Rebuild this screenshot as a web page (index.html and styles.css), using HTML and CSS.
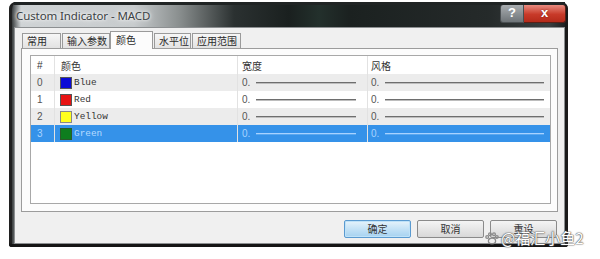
FILE: index.html
```html
<!DOCTYPE html>
<html>
<head>
<meta charset="utf-8">
<link rel="stylesheet" href="styles.css">
</head>
<body>
<div class="window">
  <div class="titlebar">
    <span class="title">Custom Indicator - MACD</span>
    <div class="caption-btns">
      <span class="cbtn help">?</span>
      <span class="cbtn close">x</span>
    </div>
  </div>
  <div class="client">
    <div class="tabs">
      <span class="tab t1">常用</span>
      <span class="tab t2">输入参数</span>
      <span class="tab t3 active">颜色</span>
      <span class="tab t4">水平位</span>
      <span class="tab t5">应用范围</span>
    </div>
    <div class="panel">
      <div class="list">
        <div class="row head">
          <span class="c-idx">#</span>
          <span class="c-color">颜色</span>
          <span class="c-width">宽度</span>
          <span class="c-style">风格</span>
        </div>
        <div class="row alt">
          <span class="c-idx">0</span>
          <span class="c-color"><i class="sw blue"></i><b class="cname">Blue</b></span>
          <span class="c-width"><em>0.</em><i class="line"></i></span>
          <span class="c-style"><em>0.</em><i class="line"></i></span>
        </div>
        <div class="row">
          <span class="c-idx">1</span>
          <span class="c-color"><i class="sw red"></i><b class="cname">Red</b></span>
          <span class="c-width"><em>0.</em><i class="line"></i></span>
          <span class="c-style"><em>0.</em><i class="line"></i></span>
        </div>
        <div class="row alt">
          <span class="c-idx">2</span>
          <span class="c-color"><i class="sw yellow"></i><b class="cname">Yellow</b></span>
          <span class="c-width"><em>0.</em><i class="line"></i></span>
          <span class="c-style"><em>0.</em><i class="line"></i></span>
        </div>
        <div class="row sel">
          <span class="c-idx">3</span>
          <span class="c-color"><i class="sw green"></i><b class="cname">Green</b></span>
          <span class="c-width"><em>0.</em><i class="line"></i></span>
          <span class="c-style"><em>0.</em><i class="line"></i></span>
        </div>
      </div>
    </div>
    <div class="buttons">
      <span class="btn default">确定</span>
      <span class="btn">取消</span>
      <span class="btn">重设</span>
    </div>
  </div>
  <div class="watermark">
    <svg class="paw" width="14" height="13" viewBox="0 0 14 13">
      <g fill="none" stroke="#8a8a8a" stroke-width="1.3">
        <ellipse cx="7" cy="9" rx="3.6" ry="2.8"/>
        <circle cx="2.2" cy="5" r="1.4"/>
        <circle cx="5" cy="2.2" r="1.4"/>
        <circle cx="9" cy="2.2" r="1.4"/>
        <circle cx="11.8" cy="5" r="1.4"/>
      </g>
    </svg>
    <span class="wm-text">@福汇小鱼2</span>
  </div>
</div>
</body>
</html>
```
FILE: styles.css
```css
html, body {
  margin: 0;
  padding: 0;
  background: #ffffff;
}
body {
  width: 600px;
  height: 259px;
  overflow: hidden;
  font-family: "Noto Sans CJK SC", "Noto Sans", sans-serif;
}
.window {
  position: relative;
  margin: 2px 0 0 9px;
  width: 559px;
  height: 245px;
  box-sizing: border-box;
  border-radius: 7px 7px 3px 3px;
  background: linear-gradient(to right, #2a2e2e 0, #3a3e3f 3px, #cfd3d5 12px, #c7cbcd 125px, #8a8f8f 170px, #2b3131 225px, #1a201f 280px, #23302c 310px, #1b2120 340px, #252a2a 480px, #3a3f40 540px, #1e1f20 556px);
  display: flex;
  flex-direction: column;
  padding: 0 3px 3px 5px;
  box-shadow: inset 0 -3px 0 #151515, inset 3px 0 0 #202020, inset -3px 0 0 #1a1a1a;
}
.titlebar {
  height: 25px;
  flex: none;
  display: flex;
  align-items: flex-start;
  justify-content: space-between;
  border-top: 3px solid #202424;
  box-sizing: border-box;
}
.title {
  margin: 4px 0 0 2px;
  font-family: "Noto Sans", sans-serif;
  font-size: 11.5px;
  line-height: 14px;
  color: #3c4244;
  text-shadow: 0 0 6px #ffffff, 0 0 3px #ffffff;
  letter-spacing: -0.1px;
  white-space: nowrap;
}
.caption-btns {
  display: flex;
  margin: 0 -1px 0 0;
}
.cbtn {
  height: 17px;
  line-height: 16px;
  text-align: center;
  color: #ffffff;
  font-family: "Liberation Sans", sans-serif;
  font-weight: bold;
}
.help {
  width: 22px;
  font-size: 13px;
  background: linear-gradient(#a9adb0, #6e7478);
  border-radius: 3px 0 0 3px;
  border: 1px solid #4a4f52;
  border-top: none;
}
.close {
  width: 41px;
  font-size: 13px;
  background: linear-gradient(#e98b7f, #c83a29 55%, #b52a1a);
  border-radius: 0 3px 3px 0;
  border: 1px solid #5a1f16;
  border-top: none;
  border-left: none;
  text-shadow: 0 0 2px #7a1a10;
}
.client {
  flex: 1;
  background: #f0f0f0;
  border: 1px solid #8c8f91;
  display: flex;
  flex-direction: column;
  padding: 0 7px 0 6px;
  position: relative;
}
.tabs {
  display: flex;
  align-items: flex-end;
  height: 20px;
  padding-left: 1px;
  font-size: 10px;
  color: #2a2a2a;
}
.tab {
  height: 15px;
  line-height: 14px;
  box-sizing: border-box;
  border: 1px solid #9a9a9a;
  border-bottom: none;
  background: linear-gradient(#f6f6f6, #e2e2e2);
  margin-right: 1px;
  padding-left: 4px;
  white-space: nowrap;
  overflow: hidden;
}
.t1 { width: 39px; }
.t2 { width: 48px; }
.t3 { width: 43px; }
.t4 { width: 37px; }
.t5 { width: 49px; }
.tab.active {
  height: 18px;
  margin: 0 -1px 0 -1px;
  background: #fcfcfc;
  position: relative;
  top: 1px;
  padding-left: 5px;
  line-height: 15px;
}
.tab.active + .tab { margin-left: 2px; }
.panel {
  width: 537px;
  height: 164px;
  box-sizing: border-box;
  border: 1px solid #9c9c9c;
  background: #fcfcfc;
  padding: 6px 0 0 8px;
}
.list {
  width: 521px;
  height: 149px;
  box-sizing: border-box;
  border: 1px solid #a8a8a8;
  background: #ffffff;
}
.row {
  display: grid;
  grid-template-columns: 24px 183px 130px 1fr;
  height: 17px;
  align-items: stretch;
  font-size: 10px;
  color: #555;
}
.row > span {
  border-right: 1px solid #e2e2e2;
  display: flex;
  align-items: center;
  overflow: hidden;
  white-space: nowrap;
}
.row > span:last-child { border-right: none; }
.row.head {
  height: 18px;
  font-size: 10px;
  color: #333;
}
.row.head .c-color { padding-left: 6px; }
.row.alt { background: #ececec; }
.row.sel { background: #3592e9; color: #a8d2ff; }
.c-idx {
  padding-left: 6px;
  font-family: "Liberation Sans", sans-serif;
}
.c-color { padding-left: 5px; }
.sw {
  display: block;
  width: 10px;
  height: 10px;
  border: 1px solid #555;
  margin-right: 2px;
  flex: none;
}
.blue { background: #0a0ad6; }
.red { background: #e81414; }
.yellow { background: #ffff1e; border-color: #888; }
.green { background: #0e7d1e; border-color: #2a5a2a; }
.cname {
  font-family: "Liberation Mono", monospace;
  font-weight: normal;
  font-size: 9.4px;
  color: #333;
}
.sel .cname { color: #b8dcff; }
.c-width { padding-left: 4px; }
.c-style { padding-left: 3px; }
em {
  font-style: normal;
  font-family: "Liberation Sans", sans-serif;
  font-size: 10px;
  width: 14px;
  flex: none;
}
.line {
  display: block;
  height: 1px;
  background: #6e6e6e;
  border-bottom: 1px solid #bdbdbd;
  flex: none;
}
.c-width .line { width: 100px; }
.c-style .line { width: 159px; }
.sel .line { background: #a8d2ff; border-bottom-color: #5aa8f0; }
.buttons {
  display: flex;
  justify-content: flex-end;
  gap: 6px;
  margin-top: 8px;
}
.btn {
  width: 67px;
  height: 18px;
  box-sizing: border-box;
  border: 1px solid #8a8a8a;
  border-radius: 2px;
  background: linear-gradient(#f4f4f4, #e6e6e6 50%, #d8d8d8);
  font-size: 10px;
  line-height: 16px;
  text-align: center;
  color: #333;
}
.btn.default {
  border-color: #5a9ad0;
  background: linear-gradient(#e6f3fb, #c4e2f6 50%, #a6d2f0);
  box-shadow: inset 0 0 0 1px #bfe2f8;
}
.watermark {
  position: absolute;
  left: 476px;
  top: 227px;
  display: flex;
  align-items: center;
  gap: 2px;
  white-space: nowrap;
}
.wm-text {
  font-size: 15px;
  line-height: 18px;
  color: #ffffff;
  white-space: nowrap;
  text-shadow: 0 0 1px #555, 0 0 1px #555, 0 0 2px #777;
}
```
